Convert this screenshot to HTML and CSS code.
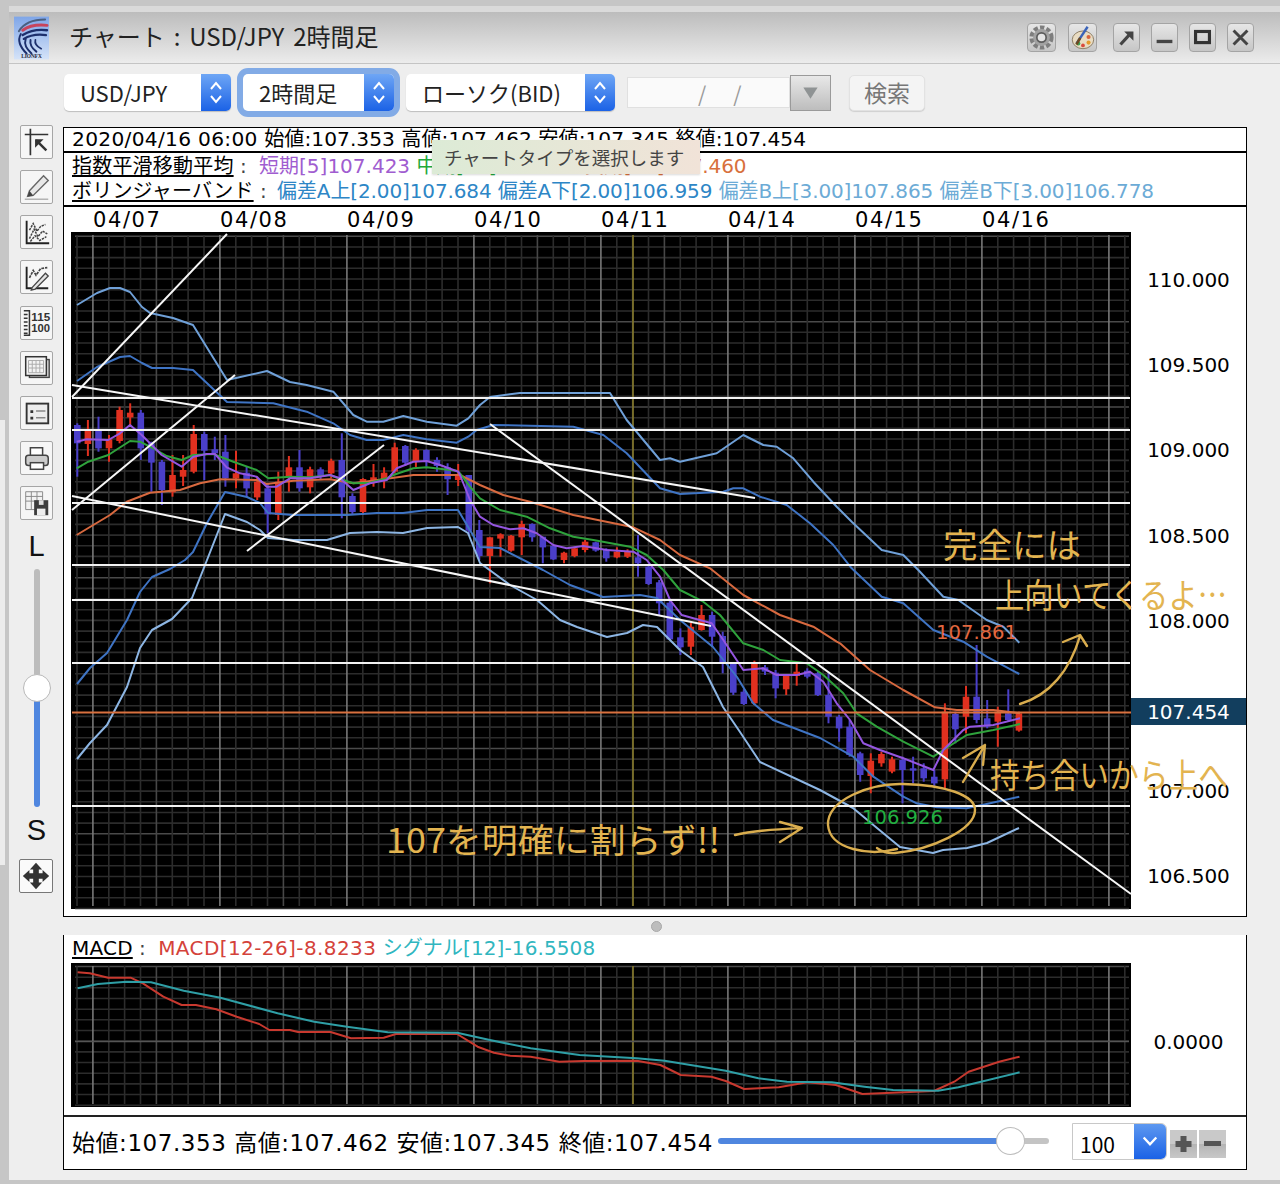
FILE: index.html
```html
<!DOCTYPE html>
<html lang="ja">
<head>
<meta charset="utf-8">
<title>チャート : USD/JPY 2時間足</title>
<link rel="stylesheet" href="styles.css">
</head>
<body>
<div class="edge-light"></div>
<div class="window">
  <header class="titlebar">
    <svg class="logo" viewBox="0 0 36 44">
      <defs><linearGradient id="logoBg" x1="0" y1="0" x2="0" y2="1"><stop offset="0" stop-color="#7fa6e8"/><stop offset="1" stop-color="#d5e3f8"/></linearGradient></defs>
      <rect width="36" height="44" fill="url(#logoBg)"/>
      <g fill="none" stroke-linecap="round">
        <path d="M5 15C10 7 20 3 32 3" stroke="#4a5f80" stroke-width="2"/>
        <path d="M9 14C16 9 24 8 34 9" stroke="#c8445c" stroke-width="3"/>
        <path d="M9 19C17 14 26 13 34 14" stroke="#1c2f6c" stroke-width="2.400"/>
        <path d="M10 23C18 18 26 18 33 19" stroke="#1c2f6c" stroke-width="2.200"/>
        <path d="M7 18C3 25 7 32 13 38" stroke="#1c2f6c" stroke-width="2"/>
        <path d="M12 23C10 29 13 33 18 38" stroke="#1c2f6c" stroke-width="2"/>
        <path d="M17 24C16 29 19 33 23 36" stroke="#1c2f6c" stroke-width="2"/>
        <path d="M22 24C21 28 24 31 28 33" stroke="#1c2f6c" stroke-width="1.800"/>
      </g>
      <text x="18" y="42.500" class="logo-text">LIONFX</text>
    </svg>
    <h1 class="title">チャート : USD/JPY 2時間足</h1>
    <div class="win-tools">
      <button class="win-btn wide" aria-label="設定"><svg viewBox="0 0 29 29"><circle cx="14.500" cy="14.500" r="10.500" fill="none" stroke="#7e7e7e" stroke-width="5" stroke-dasharray="4.500 2.300"/><circle cx="14.500" cy="14.500" r="9" fill="#a2a2a2"/><circle cx="14.500" cy="14.500" r="5" fill="#e4e4e4" stroke="#5c5c5c" stroke-width="1.800"/></svg></button>
      <button class="win-btn wide gap-l" aria-label="配色"><svg viewBox="0 0 29 29"><ellipse cx="15" cy="17" rx="11.500" ry="9.500" fill="#e9dcc2" stroke="#8a7a60"/><circle cx="10" cy="21" r="2.200" fill="#3aa655"/><circle cx="15" cy="23" r="2" fill="#d94b3c"/><circle cx="21" cy="20" r="2.200" fill="#e59a2a"/><circle cx="21" cy="14" r="2.200" fill="#d9633c"/><path d="M8 21L20 3" stroke="#3a63b8" stroke-width="2.600"/><path d="M8 22L12 15" stroke="#6d4a22" stroke-width="2.800"/></svg></button>
      <button class="win-btn gap-m" aria-label="切り離し"><svg viewBox="0 0 27 29"><path d="M7 22L18 10" stroke="#444" stroke-width="3.400"/><path d="M11 8H21V18Z" fill="#444"/></svg></button>
      <button class="win-btn gap-s" aria-label="最小化"><svg viewBox="0 0 27 29"><rect x="5" y="17" width="17" height="3.600" fill="#444"/></svg></button>
      <button class="win-btn gap-s" aria-label="最大化"><svg viewBox="0 0 27 29"><rect x="6" y="8" width="15" height="12" fill="none" stroke="#333" stroke-width="3.400"/></svg></button>
      <button class="win-btn gap-s" aria-label="閉じる"><svg viewBox="0 0 27 29"><path d="M6 7L21 22M21 7L6 22" stroke="#444" stroke-width="3.200"/></svg></button>
    </div>
  </header>

  <div class="toolbar">
    <div class="combo combo-pair"><span class="combo-label">USD/JPY</span><span class="combo-arrows"><svg viewBox="0 0 30 37"><path d="M10 15L15 9L20 15M10 22L15 28L20 22" fill="none" stroke="#fff" stroke-width="2"/></svg></span></div>
    <div class="combo combo-span focused"><span class="combo-label">2時間足</span><span class="combo-arrows"><svg viewBox="0 0 30 37"><path d="M10 15L15 9L20 15M10 22L15 28L20 22" fill="none" stroke="#fff" stroke-width="2"/></svg></span></div>
    <div class="combo combo-price"><span class="combo-label">ローソク(BID)</span><span class="combo-arrows"><svg viewBox="0 0 30 37"><path d="M10 15L15 9L20 15M10 22L15 28L20 22" fill="none" stroke="#fff" stroke-width="2"/></svg></span></div>
    <div class="date-field"><span class="date-slash">/</span><span class="date-slash">/</span></div>
    <div class="date-drop"><svg viewBox="0 0 41 36"><path d="M13 12H28L20.500 24Z" fill="#8f9394"/></svg></div>
    <button class="search">検索</button>
  </div>

  <div class="workspace">
    <nav class="rail">
      <button class="tool"><svg viewBox="0 0 33 34"><path d="M4 9H29M10 3V31" stroke="#333" stroke-width="1.800"/><path d="M16 15L27 26" stroke="#333" stroke-width="2.600"/><path d="M15 14H24L15 23Z" fill="#333"/></svg></button>
      <button class="tool"><svg viewBox="0 0 33 34"><path d="M9 21L24 5L29 10L13 26L7 27Z" fill="#e8e8e8" stroke="#666" stroke-width="1.500"/><path d="M7 27L9 21L13 26Z" fill="#444"/><path d="M4 30H29" stroke="#aaa" stroke-width="1.400"/></svg></button>
      <button class="tool"><svg viewBox="0 0 33 34"><path d="M6 5V29H30" fill="none" stroke="#222" stroke-width="2"/><path d="M9 15L13 8L17 16L21 11L26 9M9 24L14 14L18 22L23 16L28 19M10 27L15 21L20 26L27 22" fill="none" stroke="#444" stroke-width="1.600" stroke-dasharray="2.500 1"/></svg></button>
      <button class="tool"><svg viewBox="0 0 33 34"><path d="M6 6V29H29" fill="none" stroke="#222" stroke-width="2"/><path d="M9 18L13 10L16 15L21 8L28 7" fill="none" stroke="#444" stroke-width="1.800" stroke-dasharray="3 1"/><path d="M12 28L26 13L29 16L15 30L11 31Z" fill="#e4e4e4" stroke="#444" stroke-width="1.400"/></svg></button>
      <button class="tool"><svg viewBox="0 0 33 34"><path d="M3 4H9V30H3M3 8H7M3 12H7M3 16H7M3 20H7M3 24H7M3 28H7" fill="none" stroke="#333" stroke-width="1.600"/><text x="21" y="15" class="scale-num" textLength="20" lengthAdjust="spacingAndGlyphs">115</text><text x="21" y="27" class="scale-num" textLength="20" lengthAdjust="spacingAndGlyphs">100</text></svg></button>
      <button class="tool"><svg viewBox="0 0 33 34"><rect x="9" y="8" width="21" height="19" fill="#ddd" stroke="#444" stroke-width="1.500"/><rect x="5" y="5" width="22" height="20" fill="#f3f3f3" stroke="#333" stroke-width="1.600"/><path d="M8 9H24V22H8ZM8 13H24M8 17H24M12 9V22M16 9V22M20 9V22" fill="none" stroke="#aaa"/></svg></button>
      <button class="tool"><svg viewBox="0 0 33 34"><rect x="6" y="7" width="23" height="21" fill="#ececec" stroke="#333" stroke-width="2"/><path d="M10 14H13V17H10ZM10 21H13V24H10Z" fill="#333"/><path d="M16 15H26M16 22H26" stroke="#888" stroke-width="1.600"/></svg></button>
      <button class="tool"><svg viewBox="0 0 33 34"><path d="M10 15V6H23V15" fill="#fff" stroke="#444" stroke-width="1.600"/><rect x="5" y="14" width="24" height="11" rx="3" fill="#ccc" stroke="#444" stroke-width="1.600"/><rect x="10" y="22" width="14" height="7" fill="#fff" stroke="#444" stroke-width="1.600"/></svg></button>
      <button class="tool"><svg viewBox="0 0 33 34"><path d="M5 5H23V24H5ZM5 10H23M5 15H23M11 5V24M17 5V24" fill="#f3f3f3" stroke="#888"/><path d="M14 14H29V30H14Z" fill="#3c3c3c"/><rect x="19" y="14" width="5" height="5" fill="#ddd"/><rect x="17" y="23" width="9" height="7" fill="#eee"/></svg></button>
      <div class="rail-letter">L</div>
      <div class="vslider"><span class="vslider-thumb"></span></div>
      <div class="rail-letter">S</div>
      <button class="tool move"><svg viewBox="0 0 33 34"><path d="M16.500 3L23 10H19.500V14H23.500V10.500L30.500 17L23.500 23.500V20H19.500V24H23L16.500 31L10 24H13.500V20H9.500V23.500L2.500 17L9.500 10.500V14H13.500V10H10Z" fill="#333"/></svg></button>
    </nav>

    <main class="panels">
      <section class="panel-main">
        <div class="info-row"><span class="info-stamp">2020/04/16 06:00</span> 始値:107.353 高値:107.462 安値:107.345 終値:107.454</div>
        <div class="legend">
          <div class="legend-row"><span class="legend-name">指数平滑移動平均</span><span class="legend-sep"> : </span><span class="c-short">短期[5]107.423</span> <span class="c-mid">中期[13]107.390</span> <span class="c-long">長期[25]107.460</span></div>
          <div class="legend-row"><span class="legend-name">ボリンジャーバンド</span><span class="legend-sep sep-tight"> : </span><span class="c-a">偏差A上[2.00]107.684 偏差A下[2.00]106.959</span> <span class="c-b">偏差B上[3.00]107.865 偏差B下[3.00]106.778</span></div>
        </div>
        <div class="dates"><span>04/07</span><span>04/08</span><span>04/09</span><span>04/10</span><span>04/11</span><span>04/14</span><span>04/15</span><span>04/16</span></div>
        <div class="chart-row">
          <svg id="priceChart" class="plot plot-price" viewBox="71 232 1060 677" width="1060" height="677">
            <g id="priceLayer"></g>
            <text x="936" y="639" class="val val-high" textLength="81" lengthAdjust="spacingAndGlyphs">107.861</text>
            <text x="862" y="824" class="val val-low" textLength="81" lengthAdjust="spacingAndGlyphs">106.926</text>
            <g class="ink">
              <path d="M897 849C870 856 830 850 828 825C827 800 870 783 903 784C945 785 975 795 975 810C975 830 930 850 895 853C885 854 880 850 877 848"/>
              <path d="M1020 704C1050 695 1070 670 1080 636M1063 642L1080 635L1087 646"/>
              <path d="M963 782L985 745M963 758L985 745L983 765"/>
              <path d="M735 835C755 830 780 829 802 828M780 822L802 828L780 842"/>
            </g>
            <text x="943" y="558" class="note" textLength="138" lengthAdjust="spacingAndGlyphs">完全には</text>
            <text x="995" y="608" class="note" textLength="232" lengthAdjust="spacingAndGlyphs">上向いてくるよ…</text>
            <text x="990" y="788" class="note" textLength="238" lengthAdjust="spacingAndGlyphs">持ち合いから上へ</text>
            <text x="386" y="853" class="note" textLength="334" lengthAdjust="spacingAndGlyphs">107を明確に割らず!!</text>
          </svg>
          <div class="axis">
            <div class="tick">110.000</div>
            <div class="tick">109.500</div>
            <div class="tick">109.000</div>
            <div class="tick">108.500</div>
            <div class="tick">108.000</div>
            <div class="tick-now">107.454</div>
            <div class="tick after-now">107.000</div>
            <div class="tick">106.500</div>
          </div>
        </div>
      </section>

      <div class="sash"><span class="sash-dot"></span></div>

      <section class="panel-sub">
        <div class="legend-row macd-legend"><span class="legend-name">MACD</span><span class="legend-sep"> : </span><span class="c-macd">MACD[12-26]-8.8233</span> <span class="c-signal">シグナル[12]-16.5508</span></div>
        <div class="chart-row">
          <svg id="macdChart" class="plot" viewBox="71 963 1060 144" width="1060" height="144"><g id="macdLayer"></g></svg>
          <div class="axis-sub">0.0000</div>
        </div>
        <div class="ohlc-bar">
          <div class="ohlc">始値:107.353 高値:107.462 安値:107.345 終値:107.454</div>
          <div class="hslider"><span class="hslider-thumb"></span></div>
          <div class="count-combo"><span class="count-value">100</span><span class="count-arrow"><svg viewBox="0 0 33 37"><path d="M10 14L16.500 21L23 14" fill="none" stroke="#fff" stroke-width="2.400"/></svg></span></div>
          <div class="zoom-btns">
            <button class="zoom-btn"><svg viewBox="0 0 27 28"><path d="M10.500 6H16.500V11H21.500V17H16.500V22H10.500V17H5.500V11H10.500Z" fill="#555"/></svg></button>
            <button class="zoom-btn"><svg viewBox="0 0 27 28"><rect x="5" y="11" width="17" height="5" fill="#555"/></svg></button>
          </div>
        </div>
      </section>

      <div class="tooltip">チャートタイプを選択します</div>
    </main>
  </div>
</div>
<script src="chart.js"></script>
</body>
</html>
```
FILE: styles.css
```css
* { box-sizing: border-box; }
html, body { margin: 0; height: 100%; }
body {
  width: 1280px;
  height: 1184px;
  overflow: hidden;
  background: #c6c6c6;
  padding: 6px 0 4px 9px;
  font-family: "DejaVu Sans", "Noto Sans CJK JP", sans-serif;
  color: #000;
  position: relative;
}
button { font: inherit; padding: 0; margin: 0; }
svg { display: block; }
.edge-light { position: absolute; left: 0; top: 420px; width: 5px; height: 445px; background: #ececec; }

.window {
  height: 1174px;
  background: #eeeeee;
  border-top: 6px solid #dadada;
  display: flex;
  flex-direction: column;
}

/* title bar */
.titlebar {
  height: 52px;
  flex: none;
  display: flex;
  align-items: center;
  padding: 0 26px 0 5px;
  background: linear-gradient(#bcbcbc, #ececec);
  border-bottom: 1px solid #c4c4c4;
}
.logo { width: 35px; height: 44px; flex: none; }
.logo-text { font: bold 5.500px "Liberation Serif", serif; fill: #223; text-anchor: middle; }
.title {
  margin: -3px 0 0 20px;
  font: 400 24px/1 "Noto Sans CJK JP", sans-serif;
  word-spacing: 3.500px;
  color: #222;
}
.win-tools { margin-left: auto; display: flex; align-items: center; }
.win-btn {
  width: 27px;
  height: 29px;
  background: linear-gradient(#e6e6e6, #c6c6c6);
  border: 1px solid #a4a4a4;
  border-radius: 4px;
  display: block;
}
.win-btn svg { width: 100%; height: 100%; }
.win-btn.wide { width: 29px; }
.gap-l { margin-left: 12px; }
.gap-m { margin-left: 16px; }
.gap-s { margin-left: 11px; }

/* selector bar */
.toolbar {
  height: 37px;
  margin-top: 10px;
  flex: none;
  display: flex;
  align-items: center;
  padding-left: 55px;
  font-family: "Noto Sans CJK JP", sans-serif;
}
.combo {
  height: 37px;
  display: flex;
  background: #fff;
  border-radius: 5px;
  box-shadow: 0 1px 1px #bdbdbd;
  overflow: hidden;
  flex: none;
}
.combo-label { flex: 1; font-size: 22px; line-height: 36px; padding-left: 16px; color: #222; white-space: nowrap; }
.combo-arrows { width: 30px; flex: none; background: linear-gradient(#6ea6f5, #1b62e6); }
.combo-pair { width: 167px; }
.combo-span { width: 151px; margin-left: 12px; }
.combo-span.focused { box-shadow: 0 0 0 6px #82abe6; }
.combo-price { width: 209px; margin-left: 12px; }
.date-field {
  width: 163px;
  height: 31px;
  margin-left: 12px;
  background: #fafafa;
  border: 1px solid #e0e0e0;
  display: flex;
  align-items: flex-end;
  padding-left: 70px;
  gap: 27px;
  flex: none;
}
.date-slash { font-size: 21px; line-height: 27px; color: #999; }
.date-drop {
  width: 41px;
  height: 36px;
  flex: none;
  border: 1px solid #9a9a9a;
  background: linear-gradient(#e8e8e8, #bdbdbd);
}
.search {
  width: 76px;
  height: 36px;
  margin-left: 18px;
  flex: none;
  font-size: 23px;
  line-height: 33px;
  color: #777;
  background: #f4f4f4;
  border: 1px solid #e2e2e2;
  border-radius: 5px;
  box-shadow: 0 1px 1px #cfcfcf;
}

/* left rail */
.workspace { display: flex; margin-top: 14px; flex: 1; min-height: 0; }
.rail {
  width: 54px;
  flex: none;
  padding-left: 11px;
  display: flex;
  flex-direction: column;
  align-items: flex-start;
}
.tool {
  width: 33px;
  height: 34px;
  flex: none;
  margin-bottom: 11.125px;
  background: #f6f6f6;
  border: 1px solid #a6a6a6;
  border-radius: 2px;
}
.tool svg { width: 100%; height: 100%; }
.rail-letter {
  width: 33px;
  height: 30px;
  text-align: center;
  font: 400 29px/30px "Liberation Sans", sans-serif;
  color: #111;
}
.vslider {
  position: relative;
  width: 6px;
  height: 238px;
  margin: 8px 0 8px 13.500px;
  border-radius: 3px;
  background: linear-gradient(#bcbcbc 50%, #4f86df 50%);
}
.vslider-thumb {
  position: absolute;
  left: -11px;
  top: 105px;
  width: 28px;
  height: 28px;
  background: #fff;
  border: 1px solid #b8b8b8;
  border-radius: 50%;
}
.tool.move { width: 34px; margin: 14px 0 0 -1px; border: 1px solid #777; background: #fafafa; }

/* panels */
.panels { position: relative; width: 1184px; flex: none; padding-top: 2px; }
.panel-main {
  height: 790px;
  background: #fff;
  border: 1px solid #000;
}
.info-row {
  height: 25px;
  padding-left: 8px;
  font-size: 20.200px;
  line-height: 23px;
  white-space: nowrap;
  border-bottom: 2px solid #000;
}
.info-stamp { letter-spacing: .3px; }
.legend { height: 54px; border-bottom: 2px solid #000; }
.legend-row {
  height: 25px;
  padding-left: 8px;
  font-size: 20px;
  line-height: 27px;
  white-space: nowrap;
}
.legend-name { text-decoration: underline; text-underline-offset: 2px; letter-spacing: .2px; }
.legend-sep { white-space: pre; color: #444; margin-right: 6px; }
.sep-tight { margin-right: 4px; }
.c-short { color: #a05cd0; }
.c-mid { color: #22a83a; letter-spacing: -.2px; }
.c-long { color: #d8703c; letter-spacing: -.1px; }
.c-a { color: #2d86c6; letter-spacing: -.12px; }
.c-b { color: #6cabd6; letter-spacing: -.12px; }
.c-macd { color: #d4423a; letter-spacing: .4px; }
.c-signal { color: #30b6bf; letter-spacing: .1px; }
.dates {
  height: 25px;
  padding-left: 29px;
  display: flex;
  font-size: 21px;
  line-height: 27px;
  letter-spacing: 1.600px;
}
.dates span { width: 127px; flex: none; }
.chart-row { display: flex; }
.plot { margin-left: 7px; flex: none; background: #000; overflow: visible; position: relative; z-index: 2; }
.axis { flex: 1; padding-top: 5px; }
.tick { height: 85.400px; display: flex; align-items: center; justify-content: center; font-size: 20px; }
.tick-now {
  height: 27px;
  margin-top: 34px;
  background: #123e5e;
  color: #fff;
  font-size: 20px;
  line-height: 29px;
  text-align: center;
}
.after-now { margin-top: 23px; }
.axis-sub { flex: 1; display: flex; align-items: center; justify-content: center; padding-top: 13px; font-size: 20px; }

.sash { height: 18px; display: flex; align-items: center; justify-content: center; padding-left: 2px; }
.sash-dot { width: 11px; height: 11px; border-radius: 50%; background: #bdbdbd; border: 1px solid #a8a8a8; }

.panel-sub {
  height: 235px;
  background: #fff;
  border: 1px solid #000;
  border-top: 0;
}
.macd-legend { height: 28px; line-height: 26px; }
.ohlc-bar {
  height: 55px;
  margin-top: 8px;
  border-top: 2px solid #222;
  display: flex;
  align-items: center;
  padding: 0 0 5px 8px;
}
.ohlc { width: 646px; flex: none; font-size: 23px; letter-spacing: .55px; white-space: nowrap; }
.hslider {
  position: relative;
  width: 331px;
  height: 6px;
  flex: none;
  border-radius: 3px;
  background: linear-gradient(to right, #4f86df 88%, #c4c4c4 88%);
}
.hslider-thumb {
  position: absolute;
  left: 278px;
  top: -11px;
  width: 29px;
  height: 28px;
  background: #fff;
  border: 1px solid #bcbcbc;
  border-radius: 50%;
}
.count-combo {
  width: 95px;
  height: 37px;
  margin-left: 23px;
  flex: none;
  display: flex;
  background: #fff;
  border: 1px solid #c8c8c8;
  border-radius: 0 6px 6px 0;
  overflow: hidden;
}
.count-value { flex: 1; font-size: 21px; line-height: 41px; padding-left: 7px; font-family: "Noto Sans CJK JP", sans-serif; }
.count-arrow { width: 32px; flex: none; background: linear-gradient(#5d98f0, #1b62e6); }
.zoom-btns { display: flex; gap: 2px; margin: 5px 0 0 3px; }
.zoom-btn {
  width: 27px;
  height: 28px;
  border: 0;
  background: linear-gradient(#c9c9c9 50%, #b4b4b4 50%, #c8c8c8);
}
.scale-num { font: bold 11px "Liberation Sans", sans-serif; text-anchor: middle; fill: #333; }

.tooltip {
  position: absolute;
  left: 369px;
  top: 15px;
  width: 268px;
  height: 34px;
  padding-left: 12px;
  z-index: 3;
  font: 400 18.500px/34px "Noto Sans CJK JP", sans-serif;
  color: #444;
  background: linear-gradient(to right, #dcebd6, #f1e3d8);
  box-shadow: 0 1px 2px rgba(0,0,0,.15);
  white-space: nowrap;
}

/* chart overlay */
.val { font: 20px "DejaVu Sans", sans-serif; }
.val-high { fill: #e2673f; }
.val-low { fill: #22b040; }
.ink { fill: none; stroke: #d9ad4e; stroke-width: 2.400; stroke-linecap: round; stroke-linejoin: round; }
.note { font: 400 34px "Noto Sans CJK JP", sans-serif; fill: #e3b450; }
```
FILE: chart.js
```js
// Builds the grids, candles and indicator lines of both charts from data.
function pts(list, ox, oy, sx, sy) {
  var out = [];
  for (var i = 0; i < list.length; i += 2) {
    out.push([ox + list[i] / (sx || 3), oy + list[i + 1] / (sy || 3)]);
  }
  return out;
}
function merge() {
  var out = [];
  Array.prototype.forEach.call(arguments, function (seg) {
    seg.forEach(function (p) {
      if (!out.length || p[0] > out[out.length - 1][0]) out.push(p);
    });
  });
  return out;
}
function poly(points, color, width) {
  return '<polyline fill="none" stroke="' + color + '" stroke-width="' + (width || 2) +
    '" stroke-linejoin="round" points="' +
    points.map(function (p) { return p[0].toFixed(1) + ',' + p[1].toFixed(1); }).join(' ') + '"/>';
}
function line(x1, y1, x2, y2, color, width) {
  return '<line x1="' + x1 + '" y1="' + y1 + '" x2="' + x2 + '" y2="' + y2 +
    '" stroke="' + color + '" stroke-width="' + width + '"/>';
}
function grid(top, bottom, hStart, hStep, brightEvery) {
  var s = '', x, i = 0, y;
  for (y = hStart; y < bottom; y += hStep, i++) {
    s += line(75, y.toFixed(1), 1129, y.toFixed(1), i % brightEvery === 0 ? '#4a4a4a' : '#2c2c2c', 1.6);
  }
  for (i = 0, x = 77; x < 1129; x += 15.875, i++) {
    var k = i % 8;
    var c = k === 1 ? '#777' : (k === 5 ? '#474747' : '#2c2c2c');
    s += line(x.toFixed(1), top + 3, x.toFixed(1), bottom - 3, c, 1.6);
  }
  s += line(633, top + 3, 633, bottom - 3, '#8a7d2c', 1.6);
  return s;
}

/* i, colour (r/b), body top, body bottom, wick top, wick bottom: page y */
function z(oy, rows) {
  return rows.map(function (r) {
    return [r[0], r[1], oy + r[2] / 3, oy + r[3] / 3, oy + r[4] / 3, oy + r[5] / 3];
  });
}
var candles = [].concat(
  z(380, [
    [0,'b',135,190,130,290],[1,'r',152,192,120,228],[2,'b',152,205,110,215],[3,'r',178,205,165,245],
    [4,'r',90,183,80,190],[5,'r',98,112,70,140],[6,'b',98,205,90,240],[7,'b',190,248,185,335],
    [8,'b',245,330,240,375],[9,'r',285,337,225,350],[10,'r',270,290,225,318],[11,'r',162,275,135,280],
    [12,'b',162,212,155,300],[13,'b',208,220,170,240],[14,'b',215,295,165,320],[15,'r',280,296,212,325],
    [16,'b',278,325,260,350],[17,'r',305,352,290,360],[18,'b',325,403,310,460],[19,'r',305,405,275,420],
    [20,'r',262,290,228,335],[21,'b',262,325,210,335],[22,'r',268,322,260,340],[23,'b',268,290,262,300],
    [24,'r',242,280,236,295],[25,'b',240,352,160,415],[26,'b',348,396,340,405],[27,'r',297,396,295,405],
    [28,'r',292,302,252,320],[29,'r',278,298,262,325],[30,'r',202,275,188,280],[31,'b',198,248,195,258],
    [32,'r',210,245,205,262],[33,'b',210,245,208,260],[34,'b',240,258,232,275],[35,'b',262,298,250,345],
    [36,'r',284,300,252,318]
  ]),
  z(420, [
    [37,'b',165,332,165,345],[38,'b',330,408,300,420],[39,'r',352,408,352,490],[40,'r',343,356,340,410],
    [41,'r',347,392,345,395],[42,'r',312,352,302,405],[43,'b',312,352,310,365],[44,'b',350,382,350,430],
    [45,'b',377,418,375,420],[46,'r',398,420,395,430],[47,'r',385,408,380,412],[48,'r',365,390,360,397],
    [49,'b',367,392,365,395],[50,'b',388,415,385,425],[51,'r',395,412,382,415],[52,'r',393,410,388,414],
    [53,'b',412,430,345,470],[54,'b',440,492,435,495],[55,'b',487,550,480,585],[56,'b',548,658,540,660],
    [57,'b',652,682,625,705],[58,'r',620,680,608,705],[59,'r',585,630,555,632],[60,'b',585,650,575,680],
    [61,'b',648,730,635,760],[62,'b',732,818,730,825],[63,'b',815,852,808,855],[64,'r',730,850,722,855],
    [65,'b',742,755,735,765],[66,'b',758,805,750,835],[67,'r',768,808,765,825],[68,'r',755,768,730,797],
    [69,'b',752,770,745,775],[70,'b',760,825,755,828]
  ]),
  z(500, [
    [71,'b',585,650,520,670],[72,'b',650,685,645,725],[73,'b',680,765,660,770],[74,'b',760,825,755,845],
    [75,'r',782,828,760,880],[76,'r',762,790,755,800],[77,'r',778,815,770,820],[78,'b',780,810,770,910],
    [79,'b',805,812,770,850],[80,'b',805,835,790,845],[81,'b',830,850,810,860],[82,'r',635,838,610,865],
    [83,'b',642,688,635,730],[84,'r',590,650,558,700],[85,'b',590,660,435,670],[86,'b',655,680,600,685],
    [87,'r',635,665,620,740],[88,'b',640,660,568,665],[89,'r',640,692,635,695]
  ])
);
function candleSvg() {
  var s = '';
  candles.forEach(function (c) {
    var x = 77.3 + 10.58 * c[0];
    var col = c[1] === 'r' ? '#e0301f' : '#4a3fc9';
    s += line(x.toFixed(1), c[4].toFixed(1), x.toFixed(1), c[5].toFixed(1), col, 2);
    s += '<rect x="' + (x - 3.3).toFixed(1) + '" y="' + c[2].toFixed(1) + '" width="6.6" height="' +
      (c[3] - c[2]).toFixed(1) + '" fill="' + col + '"/>';
  });
  return s;
}

var LIGHT = '#6fa0d8', DARK = '#3f74c4';
var upperB = merge(
  [[77,305],[97,293],[110,288],[120,288],[130,292],[142,307],[150,313],[173,318],[193,325],[227,380],[267,371],[290,382]],
  pts([670,0,740,15,820,35,880,105,920,125,970,125,1030,108,1100,125,1190,137,1225,115,1260,75], 60, 380),
  [[490,397],[520,393],[610,393]],
  pts([500,0,600,120,630,115,660,125,770,100,850,45,910,75,950,80,1000,115,1060,185,1130,260], 460, 420),
  pts([40,0,95,65,185,150,250,165,295,210,370,290,415,300,500,360,550,380,598,428], 820, 500)
);
var upperA = merge(
  [[77,381],[97,367],[120,357],[130,356],[142,363],[152,368],[173,368],[193,370],[227,402]],
  pts([640,70,740,95,820,130,870,165,920,180,970,180,1030,165,1100,178,1190,188,1225,170], 60, 380),
  pts([50,30,100,15,340,20,430,45,500,100,600,205,660,222,790,215,820,205,850,205,900,230,980,255,1050,310,1120,375], 460, 420),
  pts([95,205,185,290,250,310,340,390,430,425,500,470,598,522], 820, 500)
);
var lowerA = merge(
  [[77,684],[90,668],[107,653],[127,620],[140,592],[152,577],[170,569],[185,560],[193,552],[207,523],[225,492],[247,497],[260,503],[268,513],[293,515],[327,515],[347,515],[377,513],[403,513],[427,510],[458,510]],
  [[480,547],[500,548],[543,570],[570,585],[603,597],[640,595],[657,598],[680,620],[713,647],[737,677],[753,703],[773,720],[820,738]],
  pts([100,770,160,830,250,890,290,910,350,922,440,925,500,912,598,890], 820, 500)
);
var lowerB = merge(
  [[77,759],[90,743],[107,725],[127,687],[140,648],[152,630],[172,619],[192,598],[207,560],[225,514],[247,522],[260,530],[268,538],[293,540],[327,540],[350,533],[377,532],[403,533],[427,528],[458,527],[468,533]],
  [[480,563],[510,585],[537,600],[560,620],[577,627],[607,637],[627,633],[643,625],[657,627],[680,650],[703,667],[723,707],[740,732],[760,762],[820,790]],
  [[853,808],[877,828],[900,847],[933,853],[943,850],[967,848],[987,843],[1019,828]]
);
var emaS = merge(
  pts([50,185,80,178,145,180,180,160,210,135,245,165,275,195,305,225,365,260,400,230,440,222,465,222,500,262,540,280,590,290,620,320,650,320,690,295,750,295,810,285,840,295,880,330,930,310,980,300,1010,265,1060,245,1100,243,1140,255,1195,275], 60, 380),
  pts([0,165,30,240,60,290,100,315,150,328,190,325,230,340,280,375,320,385,370,378,440,390,520,395,560,420,600,470,630,540,665,585,700,595,755,610,790,660,850,750,910,745,950,765,1010,765,1050,755,1090,785,1130,850], 460, 420),
  pts([40,590,90,660,130,730,180,750,250,775,340,810,370,750,430,690,450,680,520,675,600,655], 820, 500)
);
var emaM = merge(
  pts([50,265,85,245,145,225,210,183,240,185,280,205,320,228,365,240,400,225,460,222,520,245,590,270,625,295,690,290,750,292,810,285,840,297,880,310,930,308,980,295,1000,285,1060,265,1100,262,1190,272], 60, 380),
  pts([0,160,30,200,60,235,120,270,200,290,270,325,340,350,400,360,510,380,560,405,610,450,660,510,730,545,780,585,850,670,910,690,960,720,1040,730,1090,765,1150,820], 460, 420),
  pts([50,560,110,640,170,680,250,725,340,770,370,750,440,705,520,690,600,672], 820, 500)
);
var emaL = merge(
  pts([50,465,100,435,150,405,200,365,270,338,360,330,420,310,480,298,590,300,620,312,700,302,810,298,880,310,970,298,1060,285,1200,285], 60, 380),
  pts([0,160,60,195,130,225,210,245,340,285,520,322,600,360,660,405,750,445,850,525,960,585,1060,620,1130,665], 460, 420),
  pts([60,430,150,510,250,570,345,622,410,630,520,630,600,640], 820, 500)
);

var price = grid(232, 909, 236.3, 10.67, 8);
price += candleSvg();
price += poly(upperB, LIGHT) + poly(lowerB, '#8db6e4') + poly(upperA, DARK) + poly(lowerA, DARK);
price += poly(emaL, '#d8693f') + poly(emaM, '#2fa23c') + poly(emaS, '#9456e0');
[398, 430, 503, 565, 600, 663, 806].forEach(function (y) {
  price += line(72, y, 1130, y, '#f2f2f2', 2);
});
price += line(72, 712.5, 1131, 712.5, '#d9713f', 2);
[[72, 397, 227, 234], [72, 510, 235, 375], [247, 551, 384, 445], [72, 385, 755, 498], [72, 496, 711, 626], [490, 424, 1131, 894]].forEach(function (l) {
  price += line(l[0], l[1], l[2], l[3], '#f6f6f6', 2);
});
document.getElementById('priceLayer').innerHTML = price;

var macd = grid(963, 1107, 966.5, 10.67, 7);
macd += line(75, 1041.5, 1129, 1041.5, '#555', 1.6);
var macdRed = merge(
  pts([190,217,220,220,265,233,320,233,350,250,400,290,445,315,480,315,530,328,580,350,635,372,660,390,710,390,730,396,810,396,860,415,940,413,970,402,1120,402,1170,440,1210,458,1250,467,1300,470,1370,485,1430,483,1560,482], 0, 900, 2.45, 3),
  pts([50,495,100,525,175,530,210,543,255,567,340,562,410,547,480,555,545,582,720,573,770,545,805,515,880,485,930,470], 640, 900, 2.45, 3)
);
var macdTeal = merge(
  pts([190,265,240,252,310,245,370,247,450,272,540,293,680,340,770,365,850,380,950,397,1120,398,1200,420,1300,445,1420,465,1560,475], 0, 900, 2.45, 3),
  pts([60,482,210,512,290,535,360,545,470,547,550,560,620,570,730,572,780,562,930,517], 640, 900, 2.45, 3)
);
macd += poly(macdRed, '#c8392f') + poly(macdTeal, '#2f9fa6');
document.getElementById('macdLayer').innerHTML = macd;
```
